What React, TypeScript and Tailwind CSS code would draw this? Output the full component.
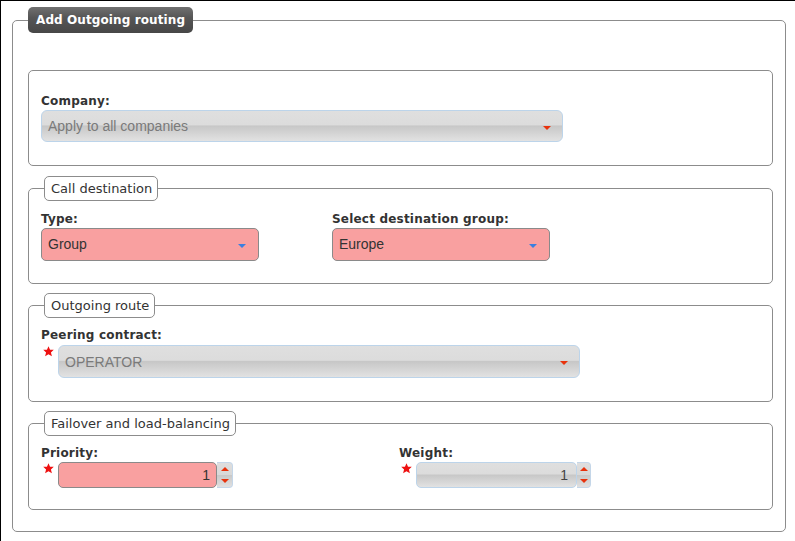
import React from 'react';

const Star = () => (
    <div className="w-[17px] shrink-0 pl-[2px] pt-[1px]">
        <svg width="11" height="11" viewBox="0 0 10 10">
            <polygon
                points="5,0.2 6.4,3.3 9.8,3.5 7.2,5.8 8.1,9.4 5,7.5 1.9,9.4 2.8,5.8 0.2,3.5 3.6,3.3"
                fill="#ee1111"
            />
        </svg>
    </div>
);

const Label = ({ children }: { children: React.ReactNode }) => (
    <div className="h-[16px] leading-[16px] text-[12px] font-bold tracking-[0.2px] text-[#333]">{children}</div>
);

const ArrowDown = ({ color }: { color: 'red' | 'blue' }) => (
    <span
        className={
            color === 'red'
                ? 'w-0 h-0 border-x-[4px] border-x-transparent border-t-[4px] border-t-[#e8320c]'
                : 'w-0 h-0 border-x-[4px] border-x-transparent border-t-[4px] border-t-[#3b7fe0]'
        }
    />
);

const GraySelect = ({ value, width, height }: { value: string; width: string; height: string }) => (
    <div
        className={`${width} ${height} flex items-center justify-between pl-[6px] pr-[11px] rounded-[6px] border border-[#bcd4ea] bg-[linear-gradient(to_bottom,#dfdfdf_0%,#dcdcdc_46%,#c7c7c7_50%,#d6d6d6_78%,#e2e2e2_100%)] font-['Liberation_Sans',Arial,sans-serif] text-[14px] text-[#7a7a7a]`}
    >
        <span className="pt-[1px]">{value}</span>
        <span className="pt-[3px] flex"><ArrowDown color="red" /></span>
    </div>
);

const PinkSelect = ({ value }: { value: string }) => (
    <div className="w-[218px] h-[33px] flex items-center justify-between pl-[6px] pr-[12px] rounded-[5px] border border-[#8a8a8a] bg-[#f9a0a0] font-['Liberation_Sans',Arial,sans-serif] text-[14px] text-[#333]">
        <span>{value}</span>
        <span className="pt-[2px] flex"><ArrowDown color="blue" /></span>
    </div>
);

const Spinner = ({ width }: { width: string }) => (
    <div
        className={`${width} h-[26px] flex flex-col rounded-r-[4px] border border-l-0 border-[#c4d6e8] bg-[linear-gradient(to_bottom,#dedede_0%,#d8d8d8_50%,#c9c9c9_52%,#e0e0e0_100%)]`}
    >
        <div className="flex-1 flex items-center justify-center">
            <span className="w-0 h-0 border-x-[4px] border-x-transparent border-b-[4px] border-b-[#e8320c]" />
        </div>
        <div className="flex-1 flex items-center justify-center">
            <span className="w-0 h-0 border-x-[4px] border-x-transparent border-t-[4px] border-t-[#e8320c]" />
        </div>
    </div>
);

const Legend = ({ children }: { children: React.ReactNode }) => (
    <legend className="ml-[3px] pl-[6px] pr-[5px] h-[25px] leading-[23px] border border-[#8c8c8c] rounded-[5px] bg-white text-[13px] text-[#333]">
        {children}
    </legend>
);

export default function App() {
    return (
        <div className="w-[795px] h-[541px] overflow-hidden border-t border-l border-black bg-white font-['DejaVu_Sans',sans-serif]">
            <fieldset className="ml-[11px] mt-[6px] w-[774px] h-[525px] border border-[#8c8c8c] rounded-[5px] pl-[15px] pr-[12px] pt-[37px]">
                <legend className="h-[26px] px-[8px] leading-[26px] rounded-[5px] bg-[linear-gradient(to_bottom,#707070_0%,#565656_40%,#474747_100%)] text-white text-[12px] font-bold tracking-[0.1px]">
                    Add Outgoing routing
                </legend>

                {/* Company */}
                <fieldset className="h-[96px] border border-[#8c8c8c] rounded-[5px] px-[12px] pt-[22px]">
                    <Label>Company:</Label>
                    <div className="mt-[1px]">
                        <GraySelect value="Apply to all companies" width="w-[522px]" height="h-[32px]" />
                    </div>
                </fieldset>

                {/* Call destination */}
                <fieldset className="mt-[10px] border border-[#8c8c8c] rounded-[5px] px-[12px] pt-[10px] pb-[22px]">
                    <Legend>Call destination</Legend>
                    <div className="flex">
                        <div className="w-[291px]">
                            <Label>Type:</Label>
                            <div className="mt-[1px]"><PinkSelect value="Group" /></div>
                        </div>
                        <div>
                            <Label>Select destination group:</Label>
                            <div className="mt-[1px]"><PinkSelect value="Europe" /></div>
                        </div>
                    </div>
                </fieldset>

                {/* Outgoing route */}
                <fieldset className="mt-[9px] border border-[#8c8c8c] rounded-[5px] px-[12px] pt-[9px] pb-[23px]">
                    <Legend>Outgoing route</Legend>
                    <Label>Peering contract:</Label>
                    <div className="mt-[2px] flex items-start">
                        <Star />
                        <GraySelect value="OPERATOR" width="w-[522px]" height="h-[33px]" />
                    </div>
                </fieldset>

                {/* Failover and load-balancing */}
                <fieldset className="mt-[9px] border border-[#8c8c8c] rounded-[5px] px-[12px] pt-[9px] pb-[21px]">
                    <Legend>Failover and load-balancing</Legend>
                    <div className="flex">
                        <div className="w-[358px]">
                            <Label>Priority:</Label>
                            <div className="mt-[1px] flex items-start">
                                <Star />
                                <div className="w-[159px] h-[26px] flex items-center justify-end pr-[6px] rounded-[5px] border border-[#8a8a8a] bg-[#f9a0a0] font-['Liberation_Sans',Arial,sans-serif] text-[14px] text-[#333]">
                                    1
                                </div>
                                <Spinner width="w-[16px]" />
                            </div>
                        </div>
                        <div>
                            <Label>Weight:</Label>
                            <div className="mt-[1px] flex items-start">
                                <Star />
                                <div className="w-[161px] h-[26px] flex items-center justify-end pr-[8px] rounded-[5px] border border-[#bcd4ea] bg-[linear-gradient(to_bottom,#dfdfdf_0%,#dcdcdc_46%,#c7c7c7_50%,#d6d6d6_78%,#e2e2e2_100%)] font-['Liberation_Sans',Arial,sans-serif] text-[14px] text-[#444]">
                                    1
                                </div>
                                <Spinner width="w-[14px]" />
                            </div>
                        </div>
                    </div>
                </fieldset>
            </fieldset>
        </div>
    );
}
